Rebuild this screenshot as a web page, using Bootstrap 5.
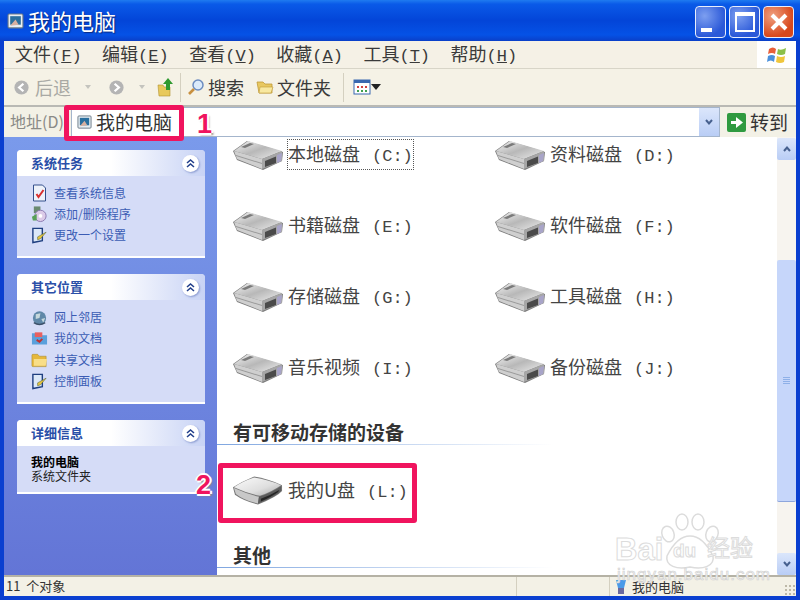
<!DOCTYPE html>
<html lang="zh-CN">

<head>
    <meta charset="UTF-8" />
    <title>我的电脑</title>
    <link href="https://cdn.jsdelivr.net/npm/bootstrap@5.3.0/dist/css/bootstrap.min.css" rel="stylesheet" />
    <style>
        html, body { height: 100%; overflow: hidden; }
        body { font-family: "Noto Sans CJK SC", "Liberation Sans", sans-serif; color: #333; background: #0a3fd0; }
        .xp-window { width: 800px; height: 600px; position: relative; display: flex; flex-direction: column; background: #0a3fd0; padding: 0 4px 4px; }
        .xp-title { height: 41px; margin: 0 -4px; padding: 2px 6px 0 7px; background: linear-gradient(#1f7bf0 0, #0a5ae8 10%, #0345d8 50%, #0552e6 85%, #0a3fc8 100%); color: #fff; font-size: 22px; line-height: 1; }
        .xp-title-text { text-shadow: 1px 1px 1px #0a2a80; margin-bottom: 4px; }
        .win-btns { gap: 3px; }
        .win-btn { width: 31px; height: 32px; border: 1px solid #e8eefc; border-radius: 4px; background: radial-gradient(circle at 30% 30%, #7d9ff0, #2a58d8 70%); }
        .win-btn.close { background: radial-gradient(circle at 30% 30%, #f0a080, #d8481c 70%); }
        .btn-min::after { content: ""; width: 11px; height: 4px; background: #fff; margin: 21px 0 0 5px; display: block; }
        .btn-max::after { content: ""; width: 20px; height: 20px; border: 2px solid #fff; border-top-width: 4px; margin: 5px 0 0 5px; display: block; }
        .xp-menu { height: 28px; background: #f5f1e6; border-bottom: 1px solid #d8d5c8; font-size: 18px; padding-left: 11px; gap: 20.5px; line-height: 25px; color: #3a3a3a; }
        .menu-key { font-family: "Liberation Mono", monospace; font-size: 17px; }
        .menu-logo { width: 39px; margin-left: auto; background: #fff; }
        .xp-tools { height: 38px; background: #f5f2e6; border-bottom: 2px solid #b9b9b4; padding-left: 9px; font-size: 18px; color: #3a3a3a; }
        .tool-sep { width: 1px; height: 29px; background: #d4d0c0; margin: 0 6px 0 5px; }
        .tool-off { color: #a9a9a4; }
        .tool-caret { width: 0; height: 0; border: 3px solid transparent; border-top: 4px solid #c4c4be; border-bottom: 0; }
        .tool-drop { width: 0; height: 0; border: 5px solid transparent; border-top: 6px solid #222; border-bottom: 0; }
        .m3 { margin-left: 3px; }
        .m5 { margin-left: 5px; }
        .m12 { margin-left: 12px; }
        .m14 { margin-left: 14px; }
        .m17 { margin-left: 17px; }
        .xp-addr { height: 30px; background: #f3f1e6; font-size: 19px; line-height: 28px; }
        .addr-label { color: #8a8a86; font-size: 16px; width: 67px; padding-left: 6px; }
        .addr-box { width: 649px; background: #fff; border: 1px solid #a4b5cc; padding-left: 5px; color: #333; }
        .addr-drop { width: 20px; margin-left: auto; background: linear-gradient(#dbe6fb, #b9cdf5); }
        .addr-go { padding-left: 7px; font-size: 19px; }
        .xp-main { flex: 1; min-height: 0; }
        .xp-side { width: 213px; padding: 13px 12px 0 13px; background: linear-gradient(#7a9aeb, #6375d6); flex: none; }
        .task-box { background: #d5dcf7; border-bottom: 2px solid #fff; margin-bottom: 16px; border-radius: 4px 4px 0 0; }
        .task-head { height: 26px; padding: 0 6px 0 14px; background: linear-gradient(90deg, #fff 50%, #c8d3f5); border-radius: 4px 4px 0 0; color: #2a4fa8; font-size: 13px; font-weight: 700; line-height: 24px; }
        .head-toggle { width: 17px; height: 17px; border-radius: 50%; background: #fff; box-shadow: 1px 1px 2px #8a9ad0; }
        .task-body { padding: 6px 12px 10.5px 14px; font-size: 12px; color: #3b5cb4; }
        .task-row { height: 21.3px; gap: 6px; }
        .detail-body { padding: 9px 14px 9px 14px; font-size: 12px; line-height: 14px; color: #222; }
        .xp-files { flex: 1; background: #fff; padding: 0 0 0 16px; min-width: 0; overflow: hidden; }
        .drive-grid { display: grid; grid-template-columns: 262px 262px; grid-auto-rows: 71px; margin-top: -18px; }
        .drive-item { gap: 5px; font-size: 18px; color: #444; }
        .usb-item { height: 92px; margin-bottom: 6px; }
        .drive-letter { font-family: "Liberation Mono", monospace; font-size: 17px; margin-left: 12px; }
        .drive-selected { outline: 1px dotted #555; outline-offset: 0; }
        .group-title { font-size: 19px; font-weight: 700; color: #333; line-height: 24px; }
        .group-first { margin-top: 17px; }
        .group-line { height: 1px; background: linear-gradient(90deg, #7fa6e0, #fff 60%); margin-left: -16px; }
        .xp-scroll { width: 19px; background: #f7f4ef; flex: none; padding-top: 1px; }
        .scroll-btn { height: 22px; background: linear-gradient(#dbe6fb, #b9cdf5); border-radius: 2px; flex: none; }
        .scroll-thumb { height: 242px; margin-top: 100px; background: #c6d6fa; border-bottom: 1px solid #8ea6dc; border-radius: 2px; }
        .thumb-grip { width: 7px; height: 8px; background: repeating-linear-gradient(#8eb0e8 0 1px, transparent 1px 2px); }
        .xp-status { height: 21px; background: #f3f1e6; border-top: 2px solid #b5b2a5; font-size: 13px; line-height: 18px; color: #333; flex: none; position: relative; }
        .status-cell { border-right: 1px solid #d4d0c0; padding-left: 2px; word-spacing: 3px; }
        .status-grip { position: absolute; right: 1px; bottom: 1px; width: 11px; height: 11px; background: radial-gradient(circle, #bdb9a8 1px, transparent 1.4px) 0 0 / 4px 4px; }
        .note-frame { position: absolute; border: 5px solid #f0145e; border-radius: 3px; }
        .note-num { position: absolute; font-family: "Liberation Sans", sans-serif; font-weight: 700; font-size: 27px; line-height: 1; color: #f0145e; text-shadow: -2px 0 #fff, 2px 0 #fff, 0 -2px #fff, 0 2px #fff, 2px 2px 2px #888; }
        .mark-paw { position: absolute; left: 612px; top: 512px; width: 150px; height: 72px; color: #fff; -webkit-text-stroke: 1px #dcdcdc; font-family: "Liberation Sans", sans-serif; pointer-events: none; }
        .mark-paw span { position: absolute; line-height: 1; white-space: nowrap; }
        .mark-bai { left: 3px; top: 22px; font-size: 31px; font-weight: 700; }
        .mark-du { left: 61px; top: 29px; font-size: 19px; font-weight: 700; }
        .mark-cn { left: 95px; top: 23px; font-size: 23px; font-family: "Noto Sans CJK SC", sans-serif; }
        .mark-url { left: 5px; top: 54px; font-size: 17px; letter-spacing: 1px; -webkit-text-stroke: .6px #cfcfcf; color: #f4f4f4; }
    </style>
</head>

<body>
    <svg width="0" height="0" class="position-absolute">
        <defs>
            <linearGradient id="hddTop" x1="0" y1="0" x2="1" y2="1"><stop offset="0" stop-color="#f4f4f4" /><stop offset="0.5" stop-color="#b8b8b8" /><stop offset="1" stop-color="#ececec" /></linearGradient>
            <linearGradient id="usbTop" x1="0" y1="0" x2="1" y2="1"><stop offset="0" stop-color="#fbfbfb" /><stop offset="0.6" stop-color="#dedede" /><stop offset="1" stop-color="#a8a8a8" /></linearGradient>
            <symbol id="hdd" viewBox="0 0 50 30">
                <path d="M0 11 L14 1 L50 12 L49 21 L30 30 L4 20 Z" fill="#7c7c7c" />
                <path d="M1 11 L15 1 L49 11 L29 19 Z" fill="url(#hddTop)" />
                <path d="M1 11 L29 19 L29 29 L4 19 Z" fill="#cfcfcf" />
                <path d="M3 15 L29 23 L29 24 L3 16 Z" fill="#9a9a9a" />
                <path d="M29 19 L49 11 L49 21 L29 29 Z" fill="#a6a6a6" />
                <path d="M32 21 L43 16.500 L43 23 L32 27 Z" fill="#4a4a4a" />
                <path d="M44 15 L49 13 L48 21 L44 23 Z" fill="#a8a4c8" />
                <path d="M8 7 L17 3 L21 4 L12 8 Z" fill="#7a7a7a" />
            </symbol>
            <symbol id="usb" viewBox="0 0 52 30">
                <path d="M0 11 Q10 5 22 0 Q36 2 51 9 L51 15 Q46 21 26 29 Q12 26 2 19 Z" fill="#777" />
                <path d="M1 11 Q10 5 22 1 Q36 3 50 9 Q40 16 28 20 Q14 17 1 11 Z" fill="url(#usbTop)" />
                <path d="M1 12 Q14 18 27 21 L26 28 Q12 25 3 18 Z" fill="#c8c8c8" />
                <path d="M27 21 Q40 17 50 10 L50 15 Q44 21 26 28 Z" fill="#5c5c5c" />
                <path d="M29 23 Q40 19 48 14 L47 16 Q40 21 29 26 Z" fill="#262626" />
            </symbol>
            <symbol id="pc" viewBox="0 0 16 16">
                <rect x="1" y="1" width="14" height="13" rx="1" fill="#e8eef2" stroke="#6a7a88" />
                <rect x="3" y="3" width="10" height="8" fill="#2a6f9e" />
                <path d="M3 12 L8 6 L11 11 Z" fill="#d8b0a0" />
            </symbol>
            <symbol id="chev" viewBox="0 0 17 17">
                <path d="M5 8 L8.500 5 L12 8 M5 12 L8.500 9 L12 12" fill="none" stroke="#23408c" stroke-width="1.600" />
            </symbol>
            <symbol id="down" viewBox="0 0 12 12">
                <path d="M3 4 L6 7.500 L9 4" fill="none" stroke="#46608e" stroke-width="2" />
            </symbol>
            <symbol id="sheet" viewBox="0 0 16 18">
                <path d="M2 1 H11 L14 4 V17 H2 Z" fill="#eef2fa" stroke="#34508c" />
                <path d="M5 10 L7 13 L12 6" fill="none" stroke="#d83030" stroke-width="2" />
            </symbol>
            <symbol id="disc" viewBox="0 0 18 18">
                <rect x="3" y="1" width="7" height="7" fill="#6a8a70" />
                <circle cx="10" cy="11" r="6" fill="#dccbe8" stroke="#8a78b0" />
                <circle cx="10" cy="11" r="2" fill="#fff" />
                <path d="M1 12 L6 9 L6 16 L2 16 Z" fill="#58a058" />
            </symbol>
            <symbol id="panel" viewBox="0 0 18 18">
                <path d="M2 2 H12 V15 L2 17 Z" fill="#dce8f8" stroke="#1f3f80" stroke-width="1.500" />
                <path d="M7 11 L16 6 L10 13 L7 14 Z" fill="#e8c440" stroke="#5a6a30" stroke-width=".6" />
            </symbol>
            <symbol id="globe" viewBox="0 0 18 18">
                <circle cx="9" cy="10" r="7" fill="#5f88a8" />
                <path d="M5 6 L10 5 L9 10 L5 11 Z M11 11 L15 10 L13 15 Z" fill="#c6d8dc" />
                <path d="M3 15 Q9 19 15 15" fill="none" stroke="#3a5068" stroke-width="1.500" />
            </symbol>
            <symbol id="docs" viewBox="0 0 18 18">
                <path d="M1 4 H7 L8 6 H17 V16 H1 Z" fill="#5aa0dc" />
                <path d="M4 3 H12 V8 H4 Z" fill="#e86060" />
                <path d="M6 11 L9 13 L12 10" fill="none" stroke="#c03030" stroke-width="2" />
            </symbol>
            <symbol id="folder" viewBox="0 0 18 18">
                <path d="M1 4 Q1 3 2 3 H7 L9 5 H16 V16 H2 Q1 16 1 15 Z" fill="#e6b83c" stroke="#a88a30" stroke-width=".6" />
                <path d="M3 8 H17 L15.500 15 H3 Z" fill="#f8de88" />
            </symbol>
            <symbol id="tool-arrow" viewBox="0 0 18 18">
                <circle cx="9" cy="9" r="7.500" fill="#b4b4b4" />
                <path d="M11 5 L6.500 9 L11 13" fill="none" stroke="#fff" stroke-width="2.400" />
            </symbol>
            <symbol id="up-folder" viewBox="0 0 18 20">
                <path d="M1 8 H6 L7 10 H13 V19 H2 Z" fill="#e8c95c" stroke="#b09030" stroke-width=".6" />
                <path d="M11 1 L16 7 H13 V13 H9 V7 H6 Z" fill="#2f9a30" />
            </symbol>
            <symbol id="lens" viewBox="0 0 18 18">
                <circle cx="11" cy="7" r="5" fill="#dbeafa" stroke="#6c8cc0" stroke-width="1.500" />
                <path d="M7 11 L2 16" stroke="#c89040" stroke-width="2.600" />
            </symbol>
            <symbol id="small-folder" viewBox="0 0 18 16">
                <path d="M1 3 H7 L9 5 H16 V14 H3 Z" fill="#e8c860" stroke="#c09a38" stroke-width=".8" />
                <path d="M4 8 H17 L15 14 H3 Z" fill="#f8e8a0" stroke="#c09a38" stroke-width=".6" />
            </symbol>
            <symbol id="views" viewBox="0 0 18 16">
                <rect x="1" y="1" width="16" height="14" fill="#fff" stroke="#3a68b0" />
                <rect x="1" y="1" width="16" height="3" fill="#3a68b0" />
                <path d="M4 7 h2 v2 h-2 Z M8 7 h2 v2 h-2 Z M12 7 h2 v2 h-2 Z" fill="#d04040" />
                <path d="M4 11 h2 v2 h-2 Z M8 11 h2 v2 h-2 Z M12 11 h2 v2 h-2 Z" fill="#40a050" />
            </symbol>
        </defs>
    </svg>

    <div class="xp-window">
        <div class="xp-title d-flex align-items-center">
            <svg width="17" height="17" class="me-1"><use href="#pc" /></svg>
            <span class="xp-title-text">我的电脑</span>
            <div class="ms-auto d-flex win-btns align-items-center">
                <div class="win-btn btn-min"></div>
                <div class="win-btn btn-max"></div>
                <div class="win-btn close d-flex align-items-center justify-content-center">
                    <svg width="22" height="22" viewBox="0 0 22 22"><path d="M4 4 L18 18 M18 4 L4 18" stroke="#fff" stroke-width="4" /></svg>
                </div>
            </div>
        </div>

        <div class="xp-menu d-flex">
            <span>文件<span class="menu-key">(<u>F</u>)</span></span>
            <span>编辑<span class="menu-key">(<u>E</u>)</span></span>
            <span>查看<span class="menu-key">(<u>V</u>)</span></span>
            <span>收藏<span class="menu-key">(<u>A</u>)</span></span>
            <span>工具<span class="menu-key">(<u>T</u>)</span></span>
            <span>帮助<span class="menu-key">(<u>H</u>)</span></span>
            <div class="menu-logo d-flex align-items-center justify-content-center">
                <svg width="20" height="20" viewBox="0 0 20 20">
                    <path d="M2 4 Q6 1 9 4 L8 9 Q5 7 1 9 Z" fill="#e8603a" />
                    <path d="M11 4 Q14 6 19 3 L18 9 Q14 11 10 9 Z" fill="#8cc04a" />
                    <path d="M1 11 Q5 9 8 11 L7 17 Q4 14 0 17 Z" fill="#4a90dc" />
                    <path d="M10 11 Q14 13 18 11 L17 17 Q13 19 9 17 Z" fill="#f0c63c" />
                </svg>
            </div>
        </div>

        <div class="xp-tools d-flex align-items-center">
            <svg width="17" height="17"><use href="#tool-arrow" /></svg>
            <span class="tool-off m5">后退</span>
            <span class="tool-caret m14"></span>
            <svg width="17" height="17" class="m17" style="transform:scaleX(-1)"><use href="#tool-arrow" /></svg>
            <span class="tool-caret m14"></span>
            <svg width="18" height="20" class="m12"><use href="#up-folder" /></svg>
            <div class="tool-sep"></div>
            <svg width="18" height="18"><use href="#lens" /></svg>
            <span class="m3">搜索</span>
            <svg width="18" height="16" class="m12"><use href="#small-folder" /></svg>
            <span class="m3">文件夹</span>
            <div class="tool-sep m12"></div>
            <svg width="18" height="16" class="m3"><use href="#views" /></svg>
            <span class="tool-drop"></span>
        </div>

        <div class="xp-addr d-flex">
            <div class="addr-label">地址(D)</div>
            <div class="addr-box d-flex align-items-center">
                <svg width="15" height="15" class="me-1"><use href="#pc" /></svg>
                <span>我的电脑</span>
                <div class="addr-drop h-100 d-flex align-items-center justify-content-center">
                    <svg width="12" height="12"><use href="#down" /></svg>
                </div>
            </div>
            <div class="addr-go d-flex align-items-center gap-1">
                <svg width="19" height="19" viewBox="0 0 19 19"><rect width="19" height="19" rx="2" fill="#2f9a40" /><path d="M4 8 H9 V4 L16 9.500 L9 15 V11 H4 Z" fill="#fff" /></svg>
                <span>转到</span>
            </div>
        </div>

        <div class="xp-main d-flex">
            <div class="xp-side">
                <div class="task-box">
                    <div class="task-head d-flex justify-content-between align-items-center">
                        <span>系统任务</span>
                        <svg class="head-toggle"><use href="#chev" /></svg>
                    </div>
                    <div class="task-body">
                        <div class="task-row d-flex align-items-center"><svg width="17" height="18"><use href="#sheet" /></svg><span>查看系统信息</span></div>
                        <div class="task-row d-flex align-items-center"><svg width="17" height="18"><use href="#disc" /></svg><span>添加/删除程序</span></div>
                        <div class="task-row d-flex align-items-center"><svg width="17" height="18"><use href="#panel" /></svg><span>更改一个设置</span></div>
                    </div>
                </div>
                <div class="task-box">
                    <div class="task-head d-flex justify-content-between align-items-center">
                        <span>其它位置</span>
                        <svg class="head-toggle"><use href="#chev" /></svg>
                    </div>
                    <div class="task-body">
                        <div class="task-row d-flex align-items-center"><svg width="17" height="18"><use href="#globe" /></svg><span>网上邻居</span></div>
                        <div class="task-row d-flex align-items-center"><svg width="17" height="18"><use href="#docs" /></svg><span>我的文档</span></div>
                        <div class="task-row d-flex align-items-center"><svg width="17" height="18"><use href="#folder" /></svg><span>共享文档</span></div>
                        <div class="task-row d-flex align-items-center"><svg width="17" height="18"><use href="#panel" /></svg><span>控制面板</span></div>
                    </div>
                </div>
                <div class="task-box">
                    <div class="task-head d-flex justify-content-between align-items-center">
                        <span>详细信息</span>
                        <svg class="head-toggle"><use href="#chev" /></svg>
                    </div>
                    <div class="detail-body">
                        <div class="fw-bold text-black">我的电脑</div>
                        <div>系统文件夹</div>
                    </div>
                </div>
            </div>

            <div class="xp-files">
                <div class="drive-grid">
                    <div class="drive-item d-flex align-items-center"><svg width="50" height="30"><use href="#hdd" /></svg><span class="drive-selected">本地磁盘<span class="drive-letter">(C:)</span></span></div>
                    <div class="drive-item d-flex align-items-center"><svg width="50" height="30"><use href="#hdd" /></svg><span>资料磁盘<span class="drive-letter">(D:)</span></span></div>
                    <div class="drive-item d-flex align-items-center"><svg width="50" height="30"><use href="#hdd" /></svg><span>书籍磁盘<span class="drive-letter">(E:)</span></span></div>
                    <div class="drive-item d-flex align-items-center"><svg width="50" height="30"><use href="#hdd" /></svg><span>软件磁盘<span class="drive-letter">(F:)</span></span></div>
                    <div class="drive-item d-flex align-items-center"><svg width="50" height="30"><use href="#hdd" /></svg><span>存储磁盘<span class="drive-letter">(G:)</span></span></div>
                    <div class="drive-item d-flex align-items-center"><svg width="50" height="30"><use href="#hdd" /></svg><span>工具磁盘<span class="drive-letter">(H:)</span></span></div>
                    <div class="drive-item d-flex align-items-center"><svg width="50" height="30"><use href="#hdd" /></svg><span>音乐视频<span class="drive-letter">(I:)</span></span></div>
                    <div class="drive-item d-flex align-items-center"><svg width="50" height="30"><use href="#hdd" /></svg><span>备份磁盘<span class="drive-letter">(J:)</span></span></div>
                </div>
                <div class="group-title group-first">有可移动存储的设备</div>
                <div class="group-line"></div>
                <div class="drive-item usb-item d-flex align-items-center"><svg width="50" height="30"><use href="#usb" /></svg><span>我的U盘<span class="drive-letter">(L:)</span></span></div>
                <div class="group-title">其他</div>
                <div class="group-line"></div>
            </div>

            <div class="xp-scroll d-flex flex-column">
                <div class="scroll-btn d-flex align-items-center justify-content-center"><svg width="12" height="12" style="transform:scaleY(-1)"><use href="#down" /></svg></div>
                <div class="scroll-thumb d-flex align-items-center justify-content-center"><div class="thumb-grip"></div></div>
                <div class="scroll-btn mt-auto d-flex align-items-center justify-content-center"><svg width="12" height="12"><use href="#down" /></svg></div>
            </div>
        </div>

        <div class="xp-status d-flex">
            <div class="status-cell" style="width:513px">11 个对象</div>
            <div class="status-cell" style="width:93px"></div>
            <div class="d-flex align-items-center ps-1 gap-1">
                <svg width="14" height="16" viewBox="0 0 14 16"><path d="M2 1 H12 L10 9 H4 Z" fill="#4a9ae8" /><path d="M4 9 H10 V15 H4 Z" fill="#6a6aa0" /></svg>
                <span>我的电脑</span>
            </div>
            <div class="status-grip"></div>
        </div>

        <div class="note-frame" style="left:64px;top:105px;width:120px;height:36px"></div>
        <div class="note-num" style="left:197px;top:111px">1</div>
        <div class="note-frame" style="left:218px;top:463px;width:199px;height:60px"></div>
        <div class="note-num" style="left:196px;top:472px">2</div>

        <div class="mark-paw">
            <svg width="70" height="62" viewBox="0 0 70 62" class="position-absolute" style="left:45px;top:0">
                <g fill="#fff" stroke="#dcdcdc" stroke-width="1.500">
                    <ellipse cx="11" cy="22" rx="6" ry="8" transform="rotate(-20 11 22)" />
                    <ellipse cx="25" cy="10" rx="6" ry="8" />
                    <ellipse cx="41" cy="10" rx="6" ry="8" />
                    <ellipse cx="55" cy="22" rx="6" ry="8" transform="rotate(20 55 22)" />
                    <path d="M33 24 C22 24 14 36 10 44 C8 54 20 58 33 55 C46 58 58 54 56 44 C52 36 44 24 33 24 Z" />
                </g>
            </svg>
            <span class="mark-bai">Bai</span>
            <span class="mark-du">du</span>
            <span class="mark-cn">经验</span>
            <span class="mark-url">jingyan.baidu.com</span>
        </div>
    </div>
</body>

</html>
